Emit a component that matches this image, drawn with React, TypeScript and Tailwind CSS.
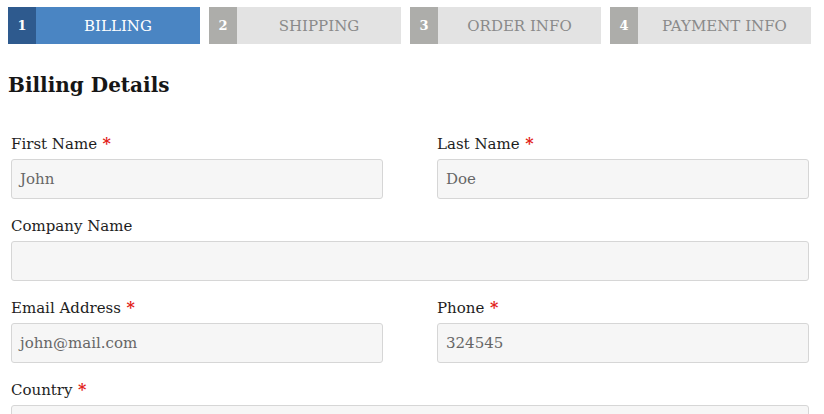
import React from "react";

const steps = [
  { n: "1", label: "BILLING", w: "w-[192px]" },
  { n: "2", label: "SHIPPING", w: "w-[192px]" },
  { n: "3", label: "ORDER INFO", w: "w-[191px]" },
  { n: "4", label: "PAYMENT INFO", w: "w-[201px]" },
];

function Field({ label, value, required }: { label: string; value?: string; required?: boolean }) {
  return (
    <div className="flex flex-col">
      <label className="text-[15px] leading-[20px] text-[#1d1d1d] mb-[5px]">
        {label}
        {required ? <span className="text-[#e2231a] font-bold text-[16px]"> *</span> : null}
      </label>
      <div className="h-[40px] rounded-[3px] border border-[#d6d6d6] bg-[#f6f6f6] px-[8px] flex items-center text-[15px] text-[#666]">
        {value}
      </div>
    </div>
  );
}

export default function App() {
  return (
    <div className="w-[824px] h-[414px] overflow-hidden bg-white font-['DejaVu_Serif','Liberation_Serif',serif]">
      <div className="flex gap-[9px] pl-[8px] pt-[7px]">
        {steps.map((s, i) => {
          const active = i === 0;
          return (
            <div key={s.n} className={`${s.w} h-[37px] flex ${active ? "bg-[#4a85c3]" : "bg-[#e3e3e3]"}`}>
              <div
                className={`w-[28px] flex items-center justify-center text-[13px] font-bold text-white ${
                  active ? "bg-[#2e5a8e]" : "bg-[#adadaa]"
                }`}
              >
                {s.n}
              </div>
              <div
                className={`flex-1 flex items-center justify-center pt-[1px] text-[15px] ${
                  active ? "text-white" : "text-[#8a8a8a]"
                }`}
              >
                {s.label}
              </div>
            </div>
          );
        })}
      </div>

      <h2 className="pl-[8px] mt-[26px] text-[20px] leading-[30px] font-bold text-[#161616]">Billing Details</h2>

      <div className="pl-[11px] pr-[15px] mt-[34px] flex flex-col gap-[17px]">
        <div className="grid grid-cols-2 gap-x-[54px]">
          <Field label="First Name" value="John" required />
          <Field label="Last Name" value="Doe" required />
        </div>
        <Field label="Company Name" />
        <div className="grid grid-cols-2 gap-x-[54px]">
          <Field label="Email Address" value="john@mail.com" required />
          <Field label="Phone" value="324545" required />
        </div>
        <Field label="Country" required />
      </div>
    </div>
  );
}
